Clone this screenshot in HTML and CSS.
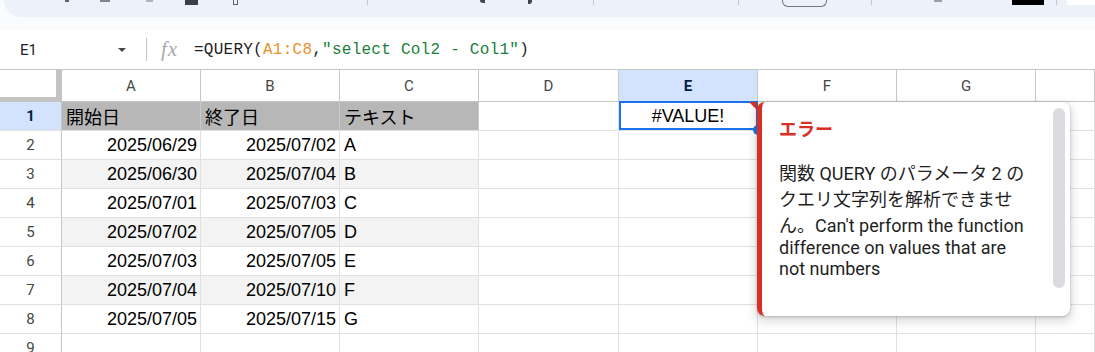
FILE: index.html
```html
<!DOCTYPE html>
<html lang="ja">
<head>
    <meta charset="UTF-8">
    <meta name="viewport" content="width=device-width, initial-scale=1.0">
    <title>QUERY エラー</title>
    <link rel="stylesheet" href="styles.css">
</head>
<body>
    <div class="top-area">
        <div class="toolbar">
            <span class="tb tb-1"></span>
            <span class="tb tb-2"></span>
            <span class="tb tb-3"></span>
            <span class="tb tb-4"></span>
            <span class="tb tb-5"></span>
            <span class="tb-sep sep-1"></span>
            <span class="tb tb-6"></span>
            <span class="tb tb-7"></span>
            <span class="tb-sep sep-2"></span>
            <span class="tb-sep sep-3"></span>
            <span class="tb tb-box"></span>
            <span class="tb-sep sep-4"></span>
            <span class="tb tb-8"></span>
            <span class="tb tb-black"></span>
            <span class="tb-sep sep-5"></span>
            <span class="tb tb-white"></span>
        </div>
    </div>

    <div class="formula-bar">
        <div class="name-box">
            <span>E1</span>
            <span class="name-arrow"></span>
        </div>
        <span class="fb-sep"></span>
        <span class="fx">fx</span>
        <div class="formula">=QUERY(<span class="f-range">A1:C8</span>,<span class="f-str">"select Col2 - Col1"</span>)</div>
    </div>

    <div class="sheet">
        <div class="grid">
            <!-- column headers -->
            <div class="cell corner"></div>
            <div class="cell col-head">A</div>
            <div class="cell col-head">B</div>
            <div class="cell col-head">C</div>
            <div class="cell col-head">D</div>
            <div class="cell col-head active">E</div>
            <div class="cell col-head">F</div>
            <div class="cell col-head">G</div>
            <div class="cell col-head"></div>

            <!-- row 1 -->
            <div class="cell row-head active">1</div>
            <div class="cell head-cell">開始日</div>
            <div class="cell head-cell">終了日</div>
            <div class="cell head-cell">テキスト</div>
            <div class="cell"></div>
            <div class="cell center sel">#VALUE!<span class="err-flag"></span><span class="handle"></span></div>
            <div class="cell"></div>
            <div class="cell"></div>
            <div class="cell"></div>

            <!-- row 2 -->
            <div class="cell row-head">2</div>
            <div class="cell num">2025/06/29</div>
            <div class="cell num">2025/07/02</div>
            <div class="cell">A</div>
            <div class="cell"></div>
            <div class="cell"></div>
            <div class="cell"></div>
            <div class="cell"></div>
            <div class="cell"></div>

            <!-- row 3 -->
            <div class="cell row-head">3</div>
            <div class="cell num band">2025/06/30</div>
            <div class="cell num band">2025/07/04</div>
            <div class="cell band">B</div>
            <div class="cell"></div>
            <div class="cell"></div>
            <div class="cell"></div>
            <div class="cell"></div>
            <div class="cell"></div>

            <!-- row 4 -->
            <div class="cell row-head">4</div>
            <div class="cell num">2025/07/01</div>
            <div class="cell num">2025/07/03</div>
            <div class="cell">C</div>
            <div class="cell"></div>
            <div class="cell"></div>
            <div class="cell"></div>
            <div class="cell"></div>
            <div class="cell"></div>

            <!-- row 5 -->
            <div class="cell row-head">5</div>
            <div class="cell num band">2025/07/02</div>
            <div class="cell num band">2025/07/05</div>
            <div class="cell band">D</div>
            <div class="cell"></div>
            <div class="cell"></div>
            <div class="cell"></div>
            <div class="cell"></div>
            <div class="cell"></div>

            <!-- row 6 -->
            <div class="cell row-head">6</div>
            <div class="cell num">2025/07/03</div>
            <div class="cell num">2025/07/05</div>
            <div class="cell">E</div>
            <div class="cell"></div>
            <div class="cell"></div>
            <div class="cell"></div>
            <div class="cell"></div>
            <div class="cell"></div>

            <!-- row 7 -->
            <div class="cell row-head">7</div>
            <div class="cell num band">2025/07/04</div>
            <div class="cell num band">2025/07/10</div>
            <div class="cell band">F</div>
            <div class="cell"></div>
            <div class="cell"></div>
            <div class="cell"></div>
            <div class="cell"></div>
            <div class="cell"></div>

            <!-- row 8 -->
            <div class="cell row-head">8</div>
            <div class="cell num">2025/07/05</div>
            <div class="cell num">2025/07/15</div>
            <div class="cell">G</div>
            <div class="cell"></div>
            <div class="cell"></div>
            <div class="cell"></div>
            <div class="cell"></div>
            <div class="cell"></div>

            <!-- row 9 -->
            <div class="cell row-head">9</div>
            <div class="cell"></div>
            <div class="cell"></div>
            <div class="cell"></div>
            <div class="cell"></div>
            <div class="cell"></div>
            <div class="cell"></div>
            <div class="cell"></div>
            <div class="cell"></div>
        </div>

        <div class="error-popup">
            <div class="error-body">
                <div class="error-title">エラー</div>
                <p class="error-text">関数 QUERY のパラメータ 2 のクエリ文字列を解析できません。Can't perform the function difference on values that are not numbers</p>
            </div>
            <div class="error-scroll"></div>
        </div>
    </div>
</body>
</html>
```

FILE: styles.css
```css
* {
    margin: 0;
    padding: 0;
    box-sizing: border-box;
}

body {
    width: 1095px;
    height: 352px;
    overflow: hidden;
    background-color: #fff;
    font-family: "Liberation Sans", Arial, "Noto Sans CJK JP", sans-serif;
    color: #000;
}

/* top toolbar (only its bottom edge is visible) */
.top-area {
    height: 30px;
    background-color: #f9fbfd;
}

.toolbar {
    height: 17px;
    margin-left: 4px;
    background-color: #edf2fa;
    border-bottom-left-radius: 22px;
    display: flex;
    align-items: flex-start;
}

.tb {
    display: block;
    flex-shrink: 0;
    height: 2px;
    background-color: #5f6368;
}

.tb-1 { margin-left: 61px; width: 4px; }
.tb-2 { margin-left: 31px; width: 10px; background-color: #80868b; }
.tb-3 { margin-left: 36px; width: 7px; background-color: #b0b4b8; }
.tb-4 { margin-left: 32px; width: 13px; height: 5px; background-color: #3c4043; }
.tb-5 { margin-left: 35px; width: 5px; height: 5px; background-color: transparent; border: 1px solid #5f6368; border-top: none; }
.tb-6 { margin-left: 112px; width: 5px; height: 3px; background-color: #444746; border-radius: 0 0 0 3px; }
.tb-7 { margin-left: 43px; width: 4px; height: 4px; background-color: #444746; border-radius: 0 0 3px 0; }
.tb-box { margin-left: 43px; width: 45px; height: 7px; background-color: transparent; border: 1px solid #747775; border-top: none; border-radius: 0 0 6px 6px; }
.tb-8 { margin-left: 62px; width: 8px; background-color: #9aa0a6; }
.tb-black { margin-left: 70px; width: 32px; height: 5px; background-color: #000; }
.tb-white { margin-left: 10px; width: 30px; height: 5px; background-color: #fff; }

.tb-sep {
    display: block;
    flex-shrink: 0;
    width: 1px;
    height: 5px;
    background-color: #c7c7c7;
}

.sep-1 { margin-left: 129px; }
.sep-2 { margin-left: 61px; }
.sep-3 { margin-left: 144px; }
.sep-4 { margin-left: 44px; }
.sep-5 { margin-left: 12px; }

/* formula bar */
.formula-bar {
    height: 40px;
    display: flex;
    align-items: center;
    background-color: #fff;
    border-bottom: 1px solid #c4c7c5;
}

.name-box {
    width: 146px;
    padding: 0 20px;
    display: flex;
    align-items: center;
    justify-content: space-between;
    font-family: Roboto, sans-serif;
    font-size: 15px;
    color: #1f1f1f;
}

.name-arrow {
    width: 0;
    height: 0;
    border-left: 4px solid transparent;
    border-right: 4px solid transparent;
    border-top: 4px solid #444746;
}

.fb-sep {
    width: 1px;
    height: 23px;
    background-color: #c4c7c5;
}

.fx {
    width: 18px;
    margin-left: 14px;
    font-family: "Liberation Serif", serif;
    font-style: italic;
    font-size: 21px;
    letter-spacing: 1px;
    color: #a8abae;
}

.formula {
    margin-left: 15px;
    font-family: "Liberation Mono", monospace;
    font-size: 16px;
    letter-spacing: 0.25px;
    color: #1f1f1f;
    white-space: nowrap;
}

.f-range {
    color: #e8912d;
}

.f-str {
    color: #188038;
}

/* sheet grid */
.sheet {
    position: relative;
}

.grid {
    display: grid;
    grid-template-columns: 62px 139px 139px 139px 140px 139px 139px 139px 1fr;
    grid-template-rows: 32px;
    grid-auto-rows: 29px;
}

.cell {
    display: flex;
    align-items: center;
    padding: 0 4px;
    border-right: 1px solid #e1e1e1;
    border-bottom: 1px solid #e1e1e1;
    font-size: 18px;
    white-space: nowrap;
    overflow: hidden;
}

.corner {
    border-right: 6px solid #c4c4c4;
    border-bottom: 5px solid #c4c4c4;
}

.col-head,
.row-head {
    justify-content: center;
    font-family: Roboto, sans-serif;
    font-size: 15px;
    color: #444746;
    border-color: #c4c7c5;
}

.row-head {
    border-bottom-color: #e1e1e1;
}

.active {
    background-color: #d3e3fd;
    color: #041e49;
    font-weight: bold;
}

.head-cell {
    background-color: #b7b7b7;
    border-right-color: #c9c9c9;
    font-size: 18px;
}

.num {
    justify-content: flex-end;
    padding-right: 3px;
}

.band {
    background-color: #f3f3f3;
}

.center {
    justify-content: center;
}

.sel {
    position: relative;
    overflow: visible;
}

.sel::after {
    content: "";
    position: absolute;
    top: -1px;
    left: 0;
    right: -1px;
    bottom: 0;
    border: 2px solid #1a73e8;
}

.err-flag {
    position: absolute;
    top: 0;
    right: 0;
    width: 0;
    height: 0;
    border-left: 8px solid transparent;
    border-top: 8px solid #d93025;
    z-index: 1;
}

.handle {
    position: absolute;
    right: -6px;
    bottom: -5px;
    width: 10px;
    height: 10px;
    border-radius: 50%;
    background-color: #1a73e8;
    z-index: 1;
}

/* error tooltip */
.error-popup {
    position: absolute;
    left: 757px;
    top: 32px;
    width: 313px;
    height: 214px;
    display: flex;
    background-color: #fff;
    border-left: 5px solid #d93025;
    border-radius: 8px;
    box-shadow: 0 1px 3px rgba(60, 64, 67, 0.3), 0 4px 8px 3px rgba(60, 64, 67, 0.15);
    z-index: 2;
}

.error-body {
    width: 269px;
    padding: 16px 0 0 17px;
    font-family: Roboto, "Noto Sans CJK JP", sans-serif;
}

.error-title {
    font-size: 18px;
    font-weight: bold;
    line-height: 24px;
    color: #d93025;
}

.error-text {
    margin-top: 17px;
    font-size: 18px;
    line-height: normal;
    color: #1f1f1f;
}

.error-scroll {
    width: 12px;
    margin: 6px 0 28px auto;
    margin-right: 5px;
    background-color: #dadce0;
    border-radius: 6px;
}
```
